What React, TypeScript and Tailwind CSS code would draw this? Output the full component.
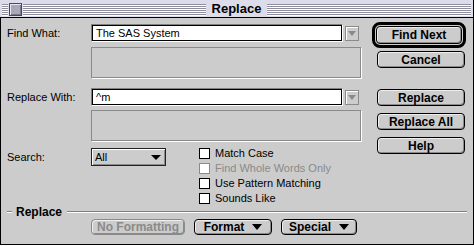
import React from "react";

const Tri = ({ color = "#000", w = 9, h = 5 }: { color?: string; w?: number; h?: number }) => (
  <svg width={w} height={h} viewBox={`0 0 ${w} ${h}`} className="block">
    <polygon points={`0,0 ${w},0 ${w / 2},${h}`} fill={color} />
  </svg>
);

const Stripes = ({ className = "" }: { className?: string }) => (
  <div
    className={
      "h-[12px] bg-[repeating-linear-gradient(to_bottom,#8e8e9e_0px,#8e8e9e_1px,#ffffff_1px,#ffffff_2px)] " +
      className
    }
  />
);

const Btn = ({
  children,
  className = "",
  disabled = false,
}: {
  children: React.ReactNode;
  className?: string;
  disabled?: boolean;
}) => (
  <div
    className={
      "flex items-center justify-center rounded-[4px] border bg-[#cccccc] shadow-[inset_1px_1px_0_#eeeeee,inset_-1px_-1px_0_#8a8a8a] text-[12px] font-bold leading-none font-['Liberation_Sans',Arial,sans-serif] " +
      (disabled ? "border-[#8a8a8a] text-[#8a8a8a] " : "border-black text-black ") +
      className
    }
  >
    {children}
  </div>
);

const EditField = ({ value }: { value: string }) => (
  <div className="w-[252px] h-[18px] border border-t-[#808080] border-l-[#808080] border-b-white border-r-white">
    <div className="w-full h-full border border-black bg-white pl-[3px] flex items-center text-[11px] leading-none text-black">
      {value}
    </div>
  </div>
);

const ArrowBtn = () => (
  <div className="ml-[2px] w-[14px] h-[15px] border border-[#8a8a8a] bg-[#cccccc] shadow-[inset_1px_1px_0_#ffffff] flex items-center justify-center">
    <Tri color="#8a8a8a" w={8} h={5} />
  </div>
);

const TextBox = ({ className = "" }: { className?: string }) => (
  <div
    className={
      "ml-[84px] w-[270px] h-[31px] border border-[#8a8a8a] bg-[#cccccc] shadow-[1px_1px_0_#ffffff] " + className
    }
  />
);

const Check = ({ label, disabled = false }: { label: string; disabled?: boolean }) => (
  <div className="flex items-center h-[11px]">
    <div
      className={
        "w-[11px] h-[11px] bg-white border " + (disabled ? "border-[#8a8a8a]" : "border-black")
      }
    />
    <span
      className={
        "ml-[5px] text-[11px] leading-[11px] whitespace-nowrap " + (disabled ? "text-[#8a8a8a]" : "text-black")
      }
    >
      {label}
    </span>
  </div>
);

export default function App() {
  return (
    <div className="w-[474px] h-[246px] bg-white font-['Liberation_Sans',Arial,sans-serif]">
      <div className="w-[474px] h-[245px] flex flex-col border-r border-b border-black">
        {/* Title bar */}
        <div className="h-[17px] bg-[#dcdcea] grid grid-cols-[1fr_auto_1fr] items-start px-[2px] pt-[4px]">
          <div className="flex items-start">
            <Stripes className="w-[6px]" />
            <div className="mx-[1px] -mt-[1px] w-[13px] h-[13px] border border-[#4a4a55] bg-[#a9a9b6] shadow-[inset_1px_1px_0_#e8e8f4,inset_-1px_-1px_0_#77778a]" />
            <Stripes className="flex-1" />
          </div>
          <div className="-mt-[3px] px-[6px] text-[13px] font-bold leading-[15px] text-black">Replace</div>
          <Stripes />
        </div>
        <div className="h-px bg-black" />
        {/* Body */}
        <div className="flex-1 border-l border-black bg-[#cccccc] flex flex-col text-[11px] text-black">
          <div className="flex">
            {/* Left column */}
            <div className="w-[371px] pl-[6px] pt-[6px] flex flex-col">
              <div className="flex items-center h-[18px]">
                <div className="w-[84px] leading-none">Find What:</div>
                <EditField value="The SAS System" />
                <ArrowBtn />
              </div>
              <TextBox className="mt-[5px]" />
              <div className="flex items-center h-[18px] mt-[10px]">
                <div className="w-[84px] leading-none">Replace With:</div>
                <EditField value="^m" />
                <ArrowBtn />
              </div>
              <TextBox className="mt-[4px]" />
              <div className="flex items-start mt-[7px]">
                <div className="w-[84px] h-[18px] flex items-center leading-none">Search:</div>
                <div className="w-[75px] h-[18px] border border-[#222222] bg-[#cccccc] shadow-[inset_1px_1px_0_#ffffff,inset_-1px_-1px_0_#8a8a8a] flex items-center justify-between pl-[3px] pr-[4px]">
                  <span className="leading-none">All</span>
                  <Tri w={10} h={5} />
                </div>
                <div className="ml-[33px] flex flex-col gap-[4px]">
                  <Check label="Match Case" />
                  <Check label="Find Whole Words Only" disabled />
                  <Check label="Use Pattern Matching" />
                  <Check label="Sounds Like" />
                </div>
              </div>
            </div>
            {/* Right column */}
            <div className="pt-[4px] flex flex-col">
              <div className="w-[94px] h-[26px] border-[3px] border-black rounded-[8px] p-[1px]">
                <Btn className="w-full h-full">Find Next</Btn>
              </div>
              <Btn className="mt-[3px] ml-[5px] w-[88px] h-[17px]">Cancel</Btn>
              <Btn className="mt-[21px] ml-[5px] w-[88px] h-[17px]">Replace</Btn>
              <Btn className="mt-[7px] ml-[5px] w-[88px] h-[17px]">Replace All</Btn>
              <Btn className="mt-[7px] ml-[5px] w-[88px] h-[17px]">Help</Btn>
            </div>
          </div>
          {/* Group separator */}
          <div className="mt-[1px] h-[14px] flex items-center pl-[6px] pr-[6px]">
            <div className="w-[5px] h-[2px] border-t border-[#808080] border-b border-b-white" />
            <span className="ml-[4px] text-[12px] font-bold leading-none">Replace</span>
            <div className="ml-[5px] flex-1 h-[2px] border-t border-[#808080] border-b border-b-white" />
          </div>
          {/* Bottom buttons */}
          <div className="flex pl-[90px] gap-[9px]">
            <Btn disabled className="w-[94px] h-[16px]">No Formatting</Btn>
            <Btn className="w-[78px] h-[16px] gap-[8px]">
              <span>Format</span>
              <Tri w={10} h={6} />
            </Btn>
            <Btn className="w-[76px] h-[16px] gap-[8px]">
              <span>Special</span>
              <Tri w={10} h={6} />
            </Btn>
          </div>
        </div>
      </div>
    </div>
  );
}
